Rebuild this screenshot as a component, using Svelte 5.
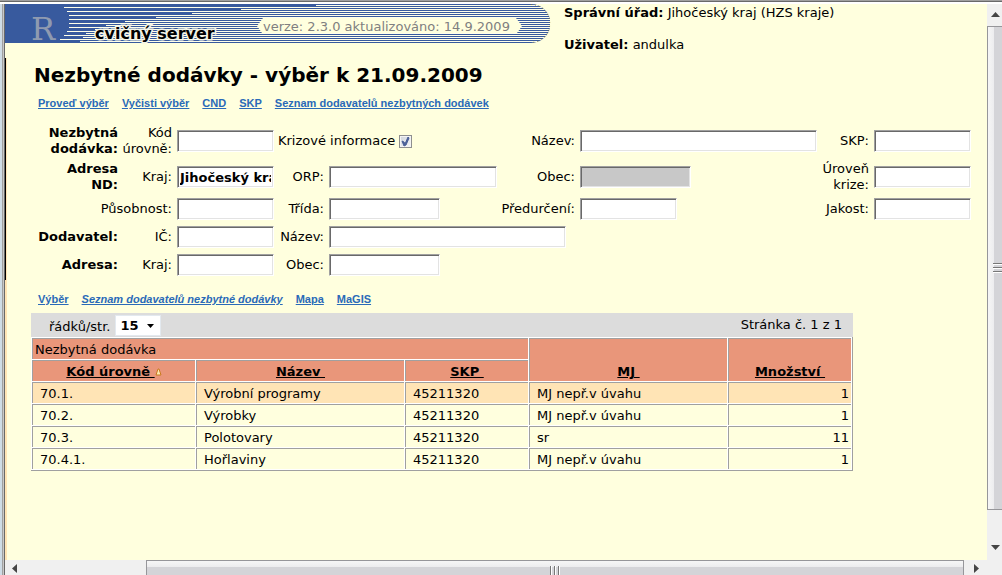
<script>
  const stripes = [
    311, 59, 236, 62, 187, 64, 151, 64, 120, 64, 101, 64, 90, 62, 81, 59, 78, 55, 75
  ]

  const actions = ['Proveď výběr', 'Vyčisti výběr', 'CND', 'SKP', 'Seznam dodavatelů nezbytných dodávek']

  const views = [
    { text: 'Výběr' },
    { text: 'Seznam dodavatelů nezbytné dodávky', current: true },
    { text: 'Mapa' },
    { text: 'MaGIS' }
  ]

  const rows = [
    { code: '70.1.', name: 'Výrobní programy', skp: '45211320', unit: 'MJ nepř.v úvahu', amount: 1 },
    { code: '70.2.', name: 'Výrobky', skp: '45211320', unit: 'MJ nepř.v úvahu', amount: 1 },
    { code: '70.3.', name: 'Polotovary', skp: '45211320', unit: 'sr', amount: 11 },
    { code: '70.4.1.', name: 'Hořlaviny', skp: '45211320', unit: 'MJ nepř.v úvahu', amount: 1 }
  ]

  let selected = $state('70.1.')
  let region = $state('Jihočeský kraj')
  let crisis = $state(true)
  let perPage = $state('15')
</script>

<div class="window">
  <div class="edge"></div>
  <main class="page">
    <div class="rail"><span></span></div>
    <header>
      <svg class="banner" width="545" height="39" viewBox="0 0 545 39">
        <defs>
          <clipPath id="banner-shape">
            <path d="M0 0H526A19.500 19.500 0 0 1 526 39H0Z" />
          </clipPath>
        </defs>
        <g clip-path="url(#banner-shape)">
          <rect width="545" height="39" fill="#385a9e" />
          {#each stripes as start, i}
            <rect x={start} y={i * 2 + 1} width={545 - start} height="1" fill="#ffffea" shape-rendering="crispEdges" />
          {/each}
          <path d="M258 14H511L517 22L512 29H257L252 22Z" fill="#ffffde" />
          <path d="M526 0.500A19 19 0 0 1 526 38.500" fill="none" stroke="#8d7a20" stroke-dasharray="1 3" />
        </g>
        <text class="mark" x="26" y="36">R</text>
        <text class="server" x="90" y="35">cvičný server</text>
        <text class="version" x="258" y="27">verze: 2.3.0 aktualizováno: 14.9.2009</text>
      </svg>
      <div class="account">
        <div><b>Správní úřad:</b> Jihočeský kraj (HZS kraje)</div>
        <div><b>Uživatel:</b> andulka</div>
      </div>
    </header>

    <h1>Nezbytné dodávky - výběr k 21.09.2009</h1>

    <nav>
      {#each actions as action}
        <a href="#top">{action}</a>
      {/each}
    </nav>

    <form>
      <b class="c1">Nezbytná dodávka:</b>
      <label class="c2" for="code">Kód úrovně:</label>
      <input class="c3" id="code" type="text" />
      <label class="crisis">
        Krizové informace
        <span class="check">
          <input type="checkbox" bind:checked={crisis} />
          {#if crisis}
            <svg width="13" height="13" viewBox="0 0 13 13">
              <path d="M3 6L5 7L6 9L9 2L10 3L7 10L5 11Z" fill="#4a5f97" stroke="#4a5f97" />
            </svg>
          {/if}
        </span>
      </label>
      <label class="c6" for="name">Název:</label>
      <input class="c7" id="name" type="text" />
      <label class="c8" for="skp">SKP:</label>
      <input class="c9" id="skp" type="text" />

      <b class="c1">Adresa ND:</b>
      <label class="c2" for="region">Kraj:</label>
      <input class="c3" id="region" type="text" bind:value={region} />
      <label class="c4" for="orp">ORP:</label>
      <input class="c5" id="orp" type="text" />
      <label class="c6" for="town">Obec:</label>
      <input class="c7 town" id="town" type="text" disabled />
      <label class="c8" for="level">Úroveň krize:</label>
      <input class="c9" id="level" type="text" />

      <label class="scope" for="scope">Působnost:</label>
      <input class="c3" id="scope" type="text" />
      <label class="c4" for="class">Třída:</label>
      <input class="c5 medium" id="class" type="text" />
      <label class="c6" for="purpose">Předurčení:</label>
      <input class="c7 short" id="purpose" type="text" />
      <label class="c8" for="quality">Jakost:</label>
      <input class="c9" id="quality" type="text" />

      <b class="c1">Dodavatel:</b>
      <label class="c2" for="ico">IČ:</label>
      <input class="c3" id="ico" type="text" />
      <label class="c4" for="supplier">Název:</label>
      <input class="supplier" id="supplier" type="text" />

      <b class="c1">Adresa:</b>
      <label class="c2" for="supplier-region">Kraj:</label>
      <input class="c3" id="supplier-region" type="text" />
      <label class="c4" for="supplier-town">Obec:</label>
      <input class="c5 medium" id="supplier-town" type="text" />
    </form>

    <nav>
      {#each views as view}
        <a href="#top" class:current={view.current}>{view.text}</a>
      {/each}
    </nav>

    <section class="list">
      <div class="toolbar">
        <label for="per-page">řádků/str.</label>
        <span class="select">
          <select id="per-page" bind:value={perPage}>
            <option>15</option>
            <option>30</option>
          </select>
          <svg width="7" height="4" viewBox="0 0 7 4"><path d="M0 0H7L3.500 4Z" /></svg>
        </span>
        <span class="pages">Stránka č. 1 z 1</span>
      </div>
      <table>
        <colgroup>
          <col class="w-code" />
          <col class="w-name" />
          <col class="w-skp" />
          <col class="w-unit" />
          <col class="w-amount" />
        </colgroup>
        <thead>
          <tr>
            <th class="group" colspan="3">Nezbytná dodávka</th>
            <th rowspan="2"><a href="#top">MJ&nbsp;</a></th>
            <th rowspan="2"><a href="#top">Množství&nbsp;</a></th>
          </tr>
          <tr>
            <th>
              <a href="#top">Kód úrovně&nbsp;<svg width="7" height="8" viewBox="0 0 7 8"><path d="M1 7L3 1H4L6 7Z" fill="#ffe9b0" stroke="#c8781e" /></svg></a>
            </th>
            <th><a href="#top">Název&nbsp;</a></th>
            <th><a href="#top">SKP&nbsp;</a></th>
          </tr>
        </thead>
        <tbody>
          {#each rows as row}
            <tr class:selected={row.code === selected} onclick={() => (selected = row.code)}>
              <td>{row.code}</td>
              <td>{row.name}</td>
              <td>{row.skp}</td>
              <td>{row.unit}</td>
              <td class="amount">{row.amount}</td>
            </tr>
          {/each}
        </tbody>
      </table>
    </section>
  </main>

  <div class="bar vertical">
    <svg width="9" height="5" viewBox="0 0 9 5"><path d="M0 5L4.500 0L9 5Z" /></svg>
    <div class="thumb"><i></i></div>
    <svg width="9" height="5" viewBox="0 0 9 5"><path d="M0 0L4.500 5L9 0Z" /></svg>
  </div>
  <div class="bar horizontal">
    <svg width="5" height="9" viewBox="0 0 5 9"><path d="M5 0L0 4.500L5 9Z" /></svg>
    <div class="thumb"><i></i></div>
    <svg width="5" height="9" viewBox="0 0 5 9"><path d="M0 0L5 4.500L0 9Z" /></svg>
  </div>
  <div class="corner"></div>
</div>

<style>
  .window {
    display: grid;
    grid-template-columns: 5px 1fr 15px;
    grid-template-rows: 1fr 15px;
    box-sizing: border-box;
    height: 100vh;
    border-top: 1px solid #a0a0a0;
    box-shadow: inset 0 1px #696969;
    padding-top: 3px;
    overflow: hidden;
    background: #fff;
    color: #000;
    font: 13px/16px Verdana, "DejaVu Sans", sans-serif;
  }
  .edge {
    grid-row: 1 / 3;
    background: linear-gradient(to right, #cfdce6 0 2px, #a0a0a0 2px 3px, #c8c8c8 3px 4px, #696969 4px);
  }
  .page {
    position: relative;
    min-width: 0;
    overflow: hidden;
    background: #ffffde;
  }
  .rail {
    position: absolute;
    top: 54px;
    bottom: 0;
    left: 0;
    width: 2px;
    background: #ffe4b5;
  }
  .rail span {
    display: block;
    width: 1px;
    height: 222px;
    background: #000;
  }
  header {
    display: flex;
    gap: 14px;
    height: 52px;
  }
  .banner {
    flex: none;
    overflow: visible;
  }
  .mark {
    font: 32px "DejaVu Serif", serif;
    fill: #8f9ab0;
  }
  .server {
    font: bold 16px "DejaVu Sans", sans-serif;
    stroke: #f4f4e6;
    stroke-width: 3px;
    paint-order: stroke;
  }
  .version {
    font: 13px "DejaVu Sans", sans-serif;
    fill: #808080;
  }
  .account {
    display: grid;
    align-content: start;
    gap: 16px;
    padding-top: 1px;
    white-space: nowrap;
  }
  h1 {
    margin: 7px 29px 8px;
    font-size: 20px;
    line-height: 24px;
    white-space: nowrap;
  }
  nav {
    display: flex;
    gap: 13px;
    padding-left: 33px;
    font: bold 11px/16px Arial, "Liberation Sans", sans-serif;
  }
  nav a {
    color: #2a6ab8;
    white-space: nowrap;
  }
  .current {
    font-style: italic;
  }
  form {
    display: grid;
    grid-template-columns: 80px 51px 97px 47px 168px 75px 1fr 49px 97px;
    grid-auto-rows: minmax(24px, auto);
    align-items: center;
    gap: 4px;
    margin: 14px 16px 14px 33px;
  }
  form label,
  form b {
    text-align: right;
  }
  form > label {
    padding-right: 1px;
  }
  .c1 { grid-column: 1; }
  .c2 { grid-column: 2; justify-self: end; }
  .c3 { grid-column: 3; }
  .c4 { grid-column: 4; justify-self: end; }
  .c5 { grid-column: 5; }
  .c6 { grid-column: 6; justify-self: end; }
  .c7 { grid-column: 7; }
  .c8 { grid-column: 8; justify-self: end; }
  .c9 { grid-column: 9; }
  .scope { grid-column: 1 / 3; }
  .supplier { grid-column: 5 / 7; width: 237px; }
  form .crisis {
    display: flex;
    grid-column: 4 / 6;
    align-items: center;
    gap: 4px;
  }
  input[type="text"] {
    box-sizing: border-box;
    min-width: 0;
    height: 22px;
    padding: 1px 2px;
    border: 1px solid;
    border-color: #a0a0a0 #fff #fff #a0a0a0;
    border-radius: 0;
    background: #fff;
    box-shadow: inset 1px 1px #696969, inset -1px -1px #e3e3e3;
    font: bold 13px Verdana, "DejaVu Sans", sans-serif;
  }
  input[type="text"]:disabled {
    background: #c8c8c8;
  }
  .town,
  .medium {
    width: 111px;
  }
  .short {
    width: 97px;
  }
  .check {
    position: relative;
    height: 13px;
  }
  .check input {
    appearance: none;
    display: block;
    box-sizing: border-box;
    width: 13px;
    height: 13px;
    margin: 0;
    border: 1px solid #8e8f8f;
    background: linear-gradient(135deg, #cfd4dc, #f6f6f6);
    box-shadow: inset 0 0 0 1px #f4f4f4;
  }
  .check svg {
    position: absolute;
    inset: 0;
    pointer-events: none;
  }
  .list {
    width: 822px;
    margin: 6px 0 0 26px;
  }
  .toolbar {
    display: flex;
    align-items: center;
    height: 24px;
    padding: 0 11px 0 18px;
    background: #dcdcdc;
  }
  .toolbar label {
    padding-top: 4px;
  }
  .select {
    position: relative;
    margin-left: 5px;
  }
  select {
    appearance: none;
    display: block;
    box-sizing: border-box;
    width: 46px;
    height: 21px;
    padding: 0 4px;
    border: 1px solid #e3e9ef;
    border-radius: 0;
    background: #fff;
    font: bold 13px Verdana, "DejaVu Sans", sans-serif;
  }
  .select svg {
    position: absolute;
    top: 9px;
    right: 7px;
    pointer-events: none;
  }
  .pages {
    margin-left: auto;
  }
  table {
    width: 100%;
    table-layout: fixed;
    border-spacing: 1px;
    border-right: 1px solid #a0a0a0;
    border-bottom: 1px solid #a0a0a0;
    background: #fff;
  }
  .w-code { width: 163px; }
  .w-name { width: 208px; }
  .w-skp { width: 123px; }
  .w-unit { width: 198px; }
  .w-amount { width: 123px; }
  th,
  td {
    box-sizing: border-box;
    height: 21px;
    padding: 3px 2px 1px 7px;
    border: solid #a0a0a0;
    border-width: 1px 0 0 1px;
    background: #ffffde;
    white-space: nowrap;
  }
  th {
    padding: 3px 2px 1px;
    background: #e9967a;
    vertical-align: bottom;
  }
  th.group {
    font-weight: normal;
    text-align: left;
  }
  th a {
    color: #000;
  }
  .selected td {
    background: #ffe4b5;
  }
  .amount {
    text-align: right;
  }
  .bar {
    display: flex;
    align-items: center;
    background: #f0f0f0;
    overflow: hidden;
  }
  .bar svg {
    flex: none;
    fill: #444;
  }
  .thumb {
    display: flex;
    align-items: center;
    justify-content: center;
    box-sizing: border-box;
    border: 1px solid #96969a;
  }
  .vertical {
    flex-direction: column;
    padding: 8px 0 10px 2px;
  }
  .vertical .thumb {
    flex: 0 1 484px;
    align-self: stretch;
    margin: 9px 0 auto -2px;
    border-right: 0;
    background: linear-gradient(to right, #f6f6f6, #ececee 6px, #d4d4d8 6px);
  }
  .vertical .thumb i {
    width: 9px;
    height: 10px;
    margin-left: 4px;
    background: repeating-linear-gradient(#777 0 1px, #fff 1px 2px, transparent 2px 4px);
  }
  .horizontal {
    grid-column: 2;
    padding: 2px 8px 0 7px;
  }
  .horizontal .thumb {
    flex: 0 1 818px;
    align-self: stretch;
    margin: -2px 10px 0 auto;
    border-bottom: 0;
    background: linear-gradient(#f6f6f6, #ececee 6px, #d4d4d8 6px);
  }
  .horizontal .thumb i {
    width: 10px;
    height: 9px;
    margin-top: 4px;
    background: repeating-linear-gradient(to right, #777 0 1px, #fff 1px 2px, transparent 2px 4px);
  }
  .corner {
    background: #f0f0f0;
  }
</style>
